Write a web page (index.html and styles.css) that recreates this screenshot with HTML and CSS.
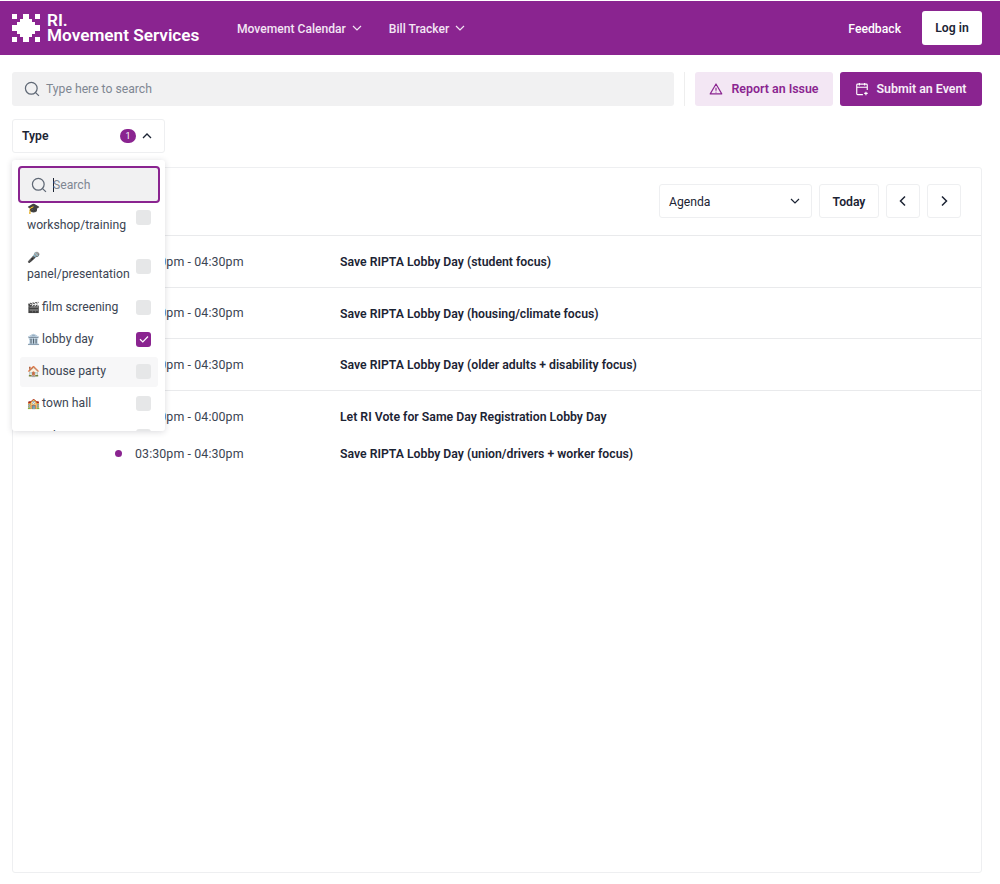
FILE: index.html
```html
<!DOCTYPE html>
<html lang="en">
<head>
<meta charset="utf-8">
<title>RI. Movement Services</title>
<link rel="stylesheet" href="styles.css">
</head>
<body>
<header class="topbar">
  <a class="brand">
    <svg class="logo" width="28" height="28" viewBox="0 0 28 28" fill="#fff"><path d="M0 0h5v5H0zM11 0h6v5h-6zM23 0h5v5h-5zM8 5h12v3h3v12h-3v3H8v-3H5V8h3zM0 11h5v6H0zM23 11h5v6h-5zM0 23h5v5H0zM11 23h6v5h-6zM23 23h5v5h-5z"/></svg>
    <span class="brand-text">RI.<br>Movement Services</span>
  </a>
  <nav class="nav">
    <a class="nav-link"><span class="push">Movement Calendar</span> <svg class="chev" width="12" height="12" viewBox="0 0 12 12"><path d="M2 4l4 4 4-4" fill="none" stroke="currentColor" stroke-width="1.2"/></svg></a>
    <a class="nav-link"><span class="push">Bill Tracker</span> <svg class="chev" width="12" height="12" viewBox="0 0 12 12"><path d="M2 4l4 4 4-4" fill="none" stroke="currentColor" stroke-width="1.2"/></svg></a>
  </nav>
  <div class="top-right">
    <a class="feedback push">Feedback</a>
    <button class="login">Log in</button>
  </div>
</header>
<main class="main">
  <div class="search-row">
    <div class="search">
      <svg width="16" height="16" viewBox="0 0 18 18" fill="none" stroke="#5f6875" stroke-width="1.4"><circle cx="8.2" cy="8.2" r="6.6"/><path d="M12.8 12.8l4 4"/></svg>
      <span class="nudge">Type here to search</span>
    </div>
    <div class="divider"></div>
    <button class="btn-light"><svg width="14" height="14" viewBox="0 0 16 16" fill="none" stroke="#8a2490" stroke-width="1.3" stroke-linejoin="round"><path d="M8 2.2L14.6 13.6H1.4zM8 6.5v3.6M8 11.2v.8"/></svg><span class="nudge">Report an Issue</span></button>
    <button class="btn-solid"><svg width="14" height="14" viewBox="0 0 16 16" fill="none" stroke="#fff" stroke-width="1.3"><path d="M14 9V3.5a1 1 0 0 0-1-1H3a1 1 0 0 0-1 1v10a1 1 0 0 0 1 1h6M2 6h12M5 1v3M11 1v3M12.5 11v4M10.5 13h4"/></svg><span class="nudge">Submit an Event</span></button>
  </div>
  <div class="filter-row">
    <button class="filter"><span class="filter-name">Type</span><span class="badge">1</span><svg width="12" height="12" viewBox="0 0 12 12"><path d="M2 8l4-4 4 4" fill="none" stroke="#1c2434" stroke-width="1.3"/></svg></button>
    <div class="dropdown">
      <div class="dd-search">
        <svg width="16" height="16" viewBox="0 0 18 18" fill="none" stroke="#5f6875" stroke-width="1.4"><circle cx="8.2" cy="8.2" r="6.6"/><path d="M12.8 12.8l4 4"/></svg>
        <span class="caret"></span><span>Search</span>
      </div>
      <div class="dd-list">
        <div class="dd-inner">
          <div class="opt"><span class="lbl"><span class="emo">🎓</span> workshop/training</span><span class="cb"></span></div>
          <div class="opt"><span class="lbl"><span class="emo">🎤</span> panel/presentation</span><span class="cb"></span></div>
          <div class="opt"><span class="lbl"><span class="emo">🎬</span> film screening</span><span class="cb"></span></div>
          <div class="opt"><span class="lbl"><span class="emo">🏛️</span> lobby day</span><span class="cb on"><svg width="12" height="12" viewBox="0 0 12 12"><path d="M2 6.3l2.8 2.7L10 3.5" fill="none" stroke="#fff" stroke-width="1.2"/></svg></span></div>
          <div class="opt hover"><span class="lbl"><span class="emo">🏠</span> house party</span><span class="cb"></span></div>
          <div class="opt"><span class="lbl"><span class="emo">🏫</span> town hall</span><span class="cb"></span></div>
          <div class="opt"><span class="lbl"><span class="emo">⭐</span> other</span><span class="cb"></span></div>
        </div>
      </div>
    </div>
  </div>
  <section class="card">
    <div class="toolbar">
      <div class="select"><span class="push2">Agenda</span><svg width="12" height="12" viewBox="0 0 12 12"><path d="M2 4l4 4 4-4" fill="none" stroke="#1c2434" stroke-width="1.2"/></svg></div>
      <button class="tool-btn"><span class="push2">Today</span></button>
      <button class="tool-btn icon"><svg width="14" height="14" viewBox="0 0 14 14"><path d="M9 2.5L4.5 7 9 11.5" fill="none" stroke="#1c2434" stroke-width="1.5"/></svg></button>
      <button class="tool-btn icon"><svg width="14" height="14" viewBox="0 0 14 14"><path d="M5 2.5L9.5 7 5 11.5" fill="none" stroke="#1c2434" stroke-width="1.5"/></svg></button>
    </div>
    <div class="day"><div class="ev"><span class="dot"></span><span class="time">03:30pm - 04:30pm</span><span class="title">Save RIPTA Lobby Day (student focus)</span></div></div>
    <div class="day"><div class="ev"><span class="dot"></span><span class="time">03:30pm - 04:30pm</span><span class="title">Save RIPTA Lobby Day (housing/climate focus)</span></div></div>
    <div class="day"><div class="ev"><span class="dot"></span><span class="time">03:30pm - 04:30pm</span><span class="title">Save RIPTA Lobby Day (older adults + disability focus)</span></div></div>
    <div class="day last">
      <div class="ev"><span class="dot"></span><span class="time">03:30pm - 04:00pm</span><span class="title">Let RI Vote for Same Day Registration Lobby Day</span></div>
      <div class="ev"><span class="dot"></span><span class="time">03:30pm - 04:30pm</span><span class="title">Save RIPTA Lobby Day (union/drivers + worker focus)</span></div>
    </div>
  </section>
</main>
</body>
</html>
```
FILE: styles.css
```css
* { box-sizing: border-box; }
html, body { margin: 0; height: 100%; }
body { font-family: Roboto, "Noto Color Emoji", sans-serif; font-size: 12.2px; color: #1c2434; background: #fff; }
button { font: inherit; cursor: pointer; }
.nudge { padding-bottom: 1px; }
.push { padding-top: 1px; }
.push2 { padding-top: 2px; }
.topbar { margin-top: 1px; height: 54px; background: #8a2490; color: #fff; display: flex; align-items: center; padding: 0 18px 0 12px; }
.brand { display: flex; align-items: center; gap: 7px; width: 225px; }
.brand-text { font-size: 17.2px; font-weight: 600; line-height: 15px; white-space: nowrap; }
.nav { display: flex; gap: 26px; }
.nav-link { display: flex; align-items: center; gap: 5px; color: #f3e6f4; font-size: 12.1px; font-weight: 500; }
.top-right { margin-left: auto; display: flex; align-items: center; gap: 21px; }
.feedback { font-weight: 500; }
.login { width: 60px; height: 34px; background: #fff; border: 0; border-radius: 3px; color: #1c2434; font-weight: 600; }
.main { padding: 17px 18px 0 12px; }
.search-row { display: flex; align-items: center; height: 34px; }
.search { flex: 1; height: 34px; background: #f1f1f2; border-radius: 3px; display: flex; align-items: center; gap: 6px; padding-left: 12px; color: #7f8792; }
.divider { width: 1px; height: 34px; background: #eee; margin: 0 10px; }
.btn-light, .btn-solid { height: 34px; border: 0; border-radius: 3px; display: flex; align-items: center; justify-content: center; gap: 8px; font-size: 12.4px; font-weight: 600; }
.btn-light { width: 138px; background: #f3e7f4; color: #8a2490; margin-right: 7px; }
.btn-solid { width: 142px; gap: 7px; background: #8a2490; color: #f7eef8; }
.filter-row { position: relative; margin-top: 13px; height: 34px; }
.filter { width: 153px; height: 34px; background: #fff; border: 1px solid #eeeff1; border-radius: 3px; display: flex; align-items: center; padding: 0 11px 0 9px; font-weight: 600; color: #1c2434; }
.filter-name { flex: 1; text-align: left; padding-top: .5px; }
.badge { width: 16px; height: 14px; border-radius: 7px; background: #8a2490; color: #fff; font-size: 9px; font-weight: 400; line-height: 14px; text-align: center; margin-right: 5px; }
.dropdown { position: absolute; z-index: 5; left: 0; top: 41px; width: 153px; height: 271px; background: #fff; border-radius: 3px; box-shadow: 0 1px 6px rgba(30, 30, 50, .16); padding: 6px 5px 0 6px; display: flex; flex-direction: column; }
.dd-search { flex: none; height: 37px; background: #f1f1f2; border: 2px solid #8a2490; border-radius: 4px; display: flex; align-items: center; padding-left: 11px; color: #7f8792; gap: 6px; position: relative; z-index: 1; }
.caret { width: 1px; height: 14px; background: #1c2434; margin-right: -7px; }
.dd-list { flex: 1; overflow: hidden; }
.dd-inner { margin-top: -9.5px; padding: 0 2px; }
.opt { display: flex; justify-content: space-between; align-items: center; padding: 6.5px 7px; color: #3c4553; line-height: 17px; border-radius: 3px; margin-bottom: 2.3px; }
.opt.hover { background: #f7f7f8; }
.lbl { flex: 1; min-width: 0; padding-right: 4px; }
.emo { font-size: 10.5px; margin-right: -1px; }
.cb { flex: none; width: 15px; height: 15px; background: #e6e7e8; border-radius: 3px; display: flex; align-items: center; justify-content: center; }
.cb.on { background: #8a2490; }
.card { margin-top: 14px; height: 706px; border: 1px solid #eeeff1; border-radius: 3px; }
.toolbar { height: 68px; border-bottom: 1px solid #e9eaec; display: flex; align-items: center; justify-content: flex-end; padding: 0 20px 2px 0; gap: 7px; }
.select { width: 153px; height: 34px; border: 1px solid #eeeff1; border-radius: 3px; display: flex; align-items: center; justify-content: space-between; padding: 0 10px 0 9px; }
.tool-btn { height: 34px; width: 60px; background: #fff; border: 1px solid #eeeff1; border-radius: 3px; font-weight: 600; color: #1c2434; display: flex; align-items: center; justify-content: center; }
.tool-btn.icon { width: 34px; }
.day { border-bottom: 1px solid #e9eaec; padding: 7px 0 7.5px; }
.day.last { border-bottom: 0; padding-top: 7.5px; }
.ev { display: flex; align-items: center; height: 36px; padding-left: 102px; }
.ev + .ev { margin-top: 1px; }
.dot { width: 7px; height: 7px; border-radius: 50%; background: #8a2490; margin-right: 13px; }
.time { width: 205px; color: #3c4553; font-size: 12.4px; letter-spacing: .1px; }
.title { font-weight: 600; font-size: 12.25px; padding-top: 2px; }
```
